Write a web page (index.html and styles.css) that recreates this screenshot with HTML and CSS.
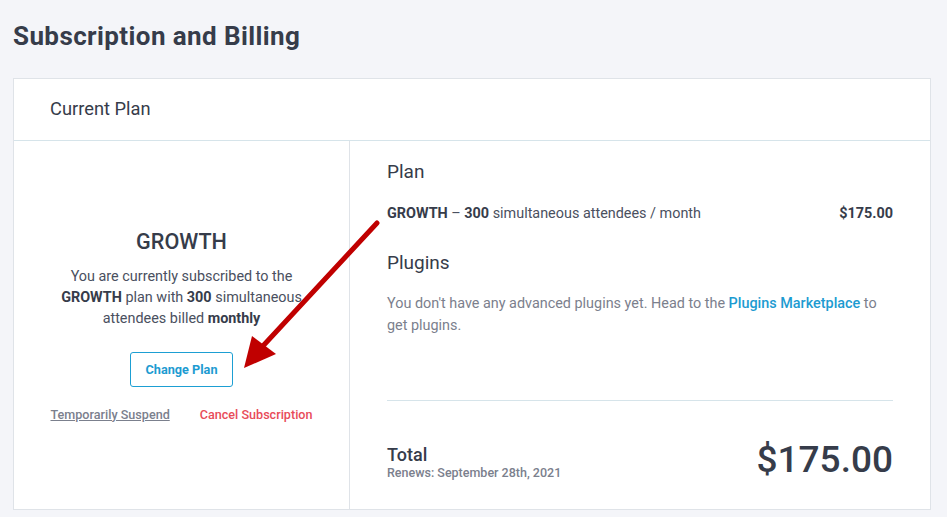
FILE: index.html
```html
<!DOCTYPE html>
<html>
<head>
<meta charset="utf-8">
<link rel="stylesheet" href="styles.css">
</head>
<body>
<h1 class="page-title">Subscription and Billing</h1>
<section class="card">
  <header class="card-header">Current Plan</header>
  <div class="card-body">
    <div class="plan-summary">
      <h2 class="plan-name">GROWTH</h2>
      <p class="plan-desc">You are currently subscribed to the <b>GROWTH</b> plan with <b>300</b> simultaneous attendees billed <b>monthly</b></p>
      <button class="btn-outline">Change Plan</button>
      <div class="plan-links">
        <a class="link-muted">Temporarily Suspend</a>
        <a class="link-danger">Cancel Subscription</a>
      </div>
    </div>
    <div class="plan-details">
      <h3 class="section-title">Plan</h3>
      <div class="line-item">
        <span><b>GROWTH</b> – <b>300</b> simultaneous attendees / month</span>
        <b>$175.00</b>
      </div>
      <h3 class="section-title plugins-title">Plugins</h3>
      <p class="plugins-text">You don't have any advanced plugins yet. Head to the <a class="link-primary">Plugins Marketplace</a> to get plugins.</p>
      <hr class="divider">
      <div class="total-row">
        <div class="total-label">
          <div class="total-title">Total</div>
          <div class="renews">Renews: September 28th, 2021</div>
        </div>
        <div class="total-amount">$175.00</div>
      </div>
    </div>
  </div>
</section>
<svg class="annotation" width="947" height="517" viewBox="0 0 947 517">
  <line x1="377" y1="223" x2="262" y2="347" stroke="#c00000" stroke-width="5" stroke-linecap="round"/>
  <polygon points="244,368 252,336 276,354" fill="#c00000"/>
</svg>
</body>
</html>
```
FILE: styles.css
```css
* { box-sizing: border-box; }
html, body { margin: 0; }
body {
  padding: 21px 16px 0 13px;
  background: #f4f5f9;
  font-family: Roboto, "Liberation Sans", sans-serif;
  color: #363c4a;
  position: relative;
  width: 947px;
  height: 517px;
  overflow: hidden;
}
.page-title {
  margin: 0;
  font-size: 26px;
  line-height: 30px;
  font-weight: 700;
  letter-spacing: 0.4px;
  color: #363c4a;
}
.card {
  margin-top: 27px;
  background: #fff;
  border: 1px solid #dfe3e8;
}
.card-header {
  height: 62px;
  padding: 0 0 3px 36px;
  display: flex;
  align-items: center;
  font-size: 18.3px;
  color: #363c4a;
  border-bottom: 1px solid #d6e4ea;
}
.card-body {
  display: flex;
}
.plan-summary {
  width: 336px;
  border-right: 1px solid #dfe3e8;
  display: flex;
  flex-direction: column;
  align-items: center;
  justify-content: center;
  text-align: center;
  padding-top: 1px;
}
.plan-name {
  margin: 0;
  font-size: 21.6px;
  line-height: 26px;
  font-weight: 500;
  color: #363c4a;
}
.plan-desc {
  margin: 11px 0 0;
  width: 256px;
  font-size: 14.4px;
  line-height: 21px;
  color: #4a5060;
}
.plan-desc b { font-weight: 700; color: #363c4a; }
.btn-outline {
  margin-top: 23px;
  width: 103px;
  height: 35px;
  border: 1px solid #1d9fd3;
  border-radius: 3px;
  background: #fff;
  color: #1d9bd1;
  font-family: inherit;
  font-size: 12.7px;
  font-weight: 700;
  padding: 0;
}
.plan-links {
  margin-top: 20px;
  display: flex;
  gap: 30px;
  font-size: 12.6px;
  line-height: 16px;
  font-weight: 500;
}
.link-muted {
  color: #7b808d;
  text-decoration: underline;
}
.link-danger {
  color: #e84c59;
}
.plan-details {
  flex: 1;
  padding: 19px 37px 29px 37px;
}
.section-title {
  margin: 0;
  font-size: 19px;
  line-height: 24px;
  font-weight: 400;
  color: #363c4a;
}
.line-item {
  margin-top: 20px;
  display: flex;
  justify-content: space-between;
  font-size: 14.4px;
  line-height: 20px;
  color: #4a5060;
}
.line-item b { font-weight: 700; color: #363c4a; }
.plugins-title { margin-top: 27px; }
.plugins-text {
  margin: 18px 0 0;
  font-size: 14.4px;
  line-height: 22px;
  color: #7b808d;
}
.link-primary {
  color: #1d9bd1;
  font-weight: 500;
}
.divider {
  margin: 63px 0 0;
  border: 0;
  border-top: 1px solid #d6e4ea;
}
.total-row {
  margin-top: 39px;
  display: flex;
  justify-content: space-between;
  align-items: flex-end;
}
.total-title {
  font-size: 18px;
  line-height: 20px;
  font-weight: 500;
  color: #363c4a;
}
.renews {
  font-size: 12.5px;
  line-height: 15px;
  font-weight: 500;
  color: #7b808d;
}
.total-amount {
  font-size: 37px;
  line-height: 40px;
  font-weight: 500;
  color: #363c4a;
}
.annotation {
  position: absolute;
  left: 0;
  top: 0;
  pointer-events: none;
}
```
